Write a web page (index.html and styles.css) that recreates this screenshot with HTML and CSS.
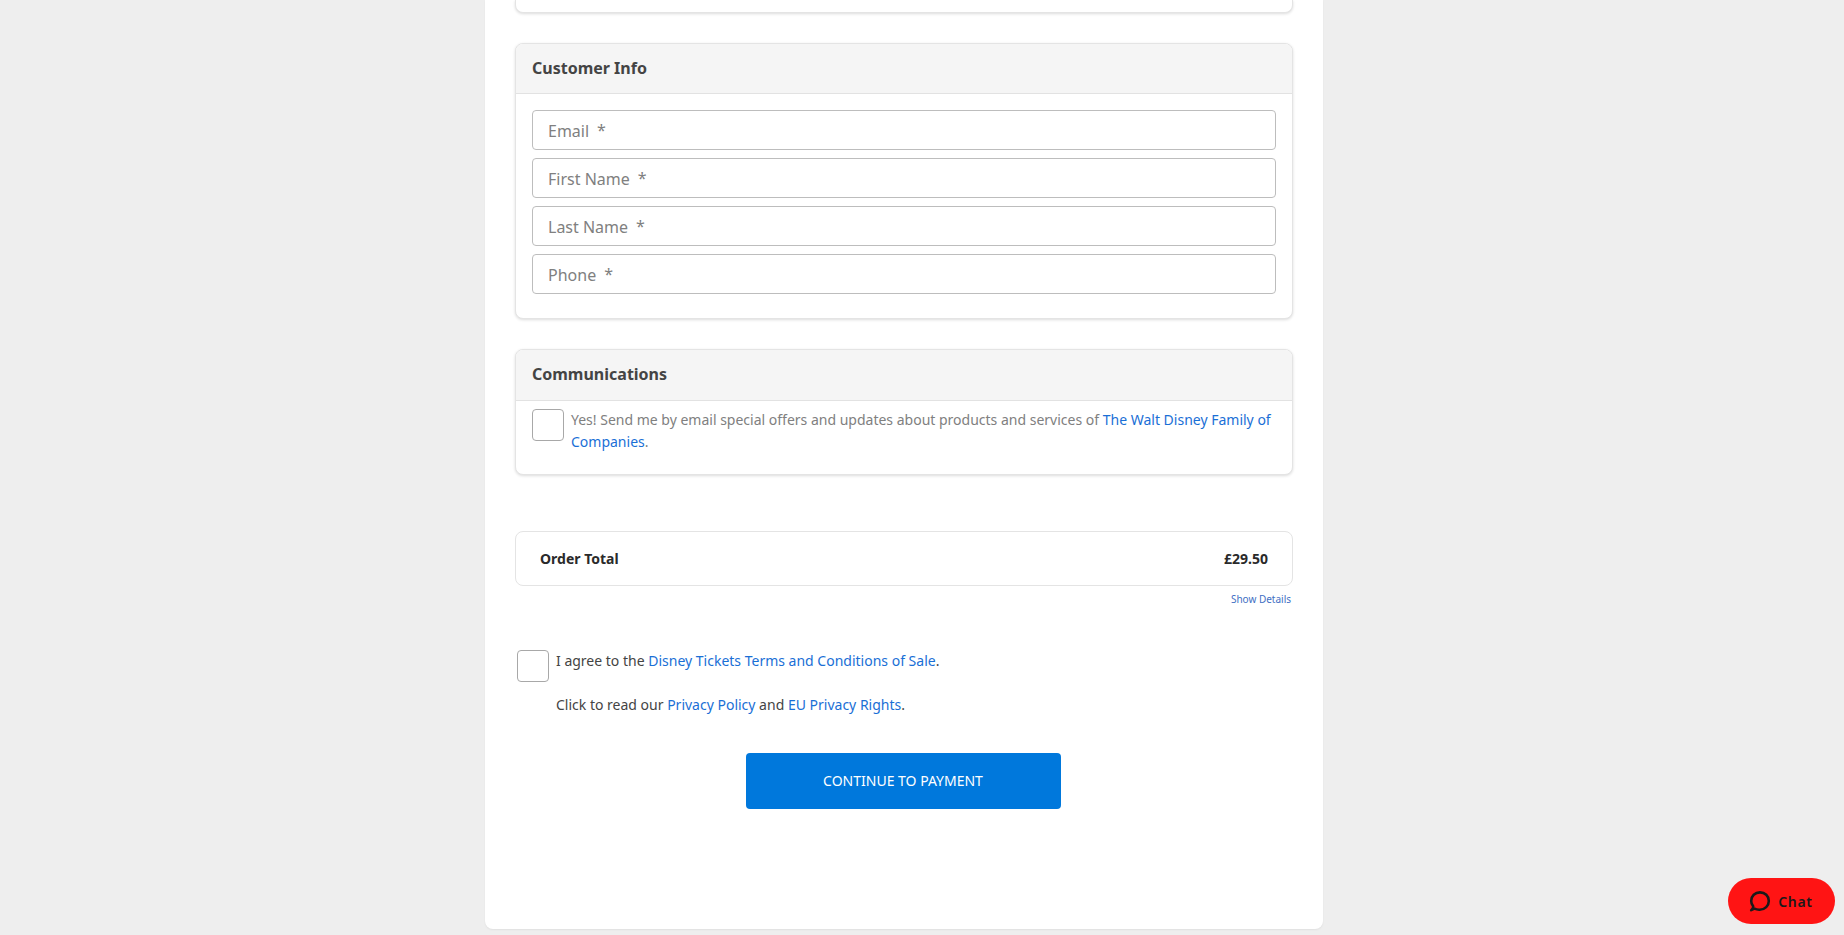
FILE: index.html
```html
<!DOCTYPE html>
<html lang="en">
<head>
<meta charset="utf-8">
<title>Checkout</title>
<link rel="stylesheet" href="styles.css">
</head>
<body>
<main class="panel">
  <section class="card card-top"></section>

  <section class="card card-info">
    <h2 class="card-head">Customer Info</h2>
    <div class="card-body fields">
      <div class="field"><span>Email</span><span class="star">*</span></div>
      <div class="field"><span>First Name</span><span class="star">*</span></div>
      <div class="field"><span>Last Name</span><span class="star">*</span></div>
      <div class="field"><span>Phone</span><span class="star">*</span></div>
    </div>
  </section>

  <section class="card card-comms">
    <h2 class="card-head">Communications</h2>
    <div class="card-body comms">
      <span class="box"></span>
      <p class="comms-text">Yes! Send me by email special offers and updates about products and services of <a href="#">The Walt Disney Family of Companies</a>.</p>
    </div>
  </section>

  <section class="total">
    <strong>Order Total</strong>
    <strong>£29.50</strong>
  </section>
  <div class="details"><a href="#">Show Details</a></div>

  <section class="agree">
    <span class="box"></span>
    <div class="agree-text">
      <p>I agree to the <a href="#">Disney Tickets Terms and Conditions of Sale</a>.</p>
      <p>Click to read our <a href="#">Privacy Policy</a> and <a href="#">EU Privacy Rights</a>.</p>
    </div>
  </section>

  <div class="actions"><button class="continue" type="button">CONTINUE TO PAYMENT</button></div>
</main>

<button class="chat" type="button">
  <svg class="chat-icon" viewBox="0 0 24 24" width="22" height="22" aria-hidden="true">
    <path d="M2.4 22 L6 20.4 C7.6 21.2 9.4 21.6 11.6 21.5 C17.4 21.3 21.6 17.2 21.6 11.9 C21.6 6.5 17.4 2.6 12 2.6 C6.6 2.6 2.4 6.5 2.4 11.9 C2.4 14.4 3.2 16.2 4.6 17.8 C4.8 19.2 4 20.8 2.4 22 Z" fill="none" stroke="currentColor" stroke-width="2.8" stroke-linejoin="round"/>
  </svg>
  <span>Chat</span>
</button>
</body>
</html>
```

FILE: styles.css
```css
* { box-sizing: border-box; }

html, body { height: 100%; }

body {
  margin: 0;
  height: 935px;
  overflow: hidden;
  padding-left: 485px;
  background: #eeeeee;
  font-family: "Noto Sans", sans-serif;
  color: #333333;
}

a { color: #1a6fd6; text-decoration: none; }
p { margin: 0; }

.panel {
  width: 838px;
  height: 929px;
  padding: 0 30px;
  background: #ffffff;
  border-radius: 0 0 8px 8px;
  box-shadow: 0 1px 2px rgba(0, 0, 0, 0.06);
}

.card {
  background: #ffffff;
  border: 1px solid #e4e4e4;
  border-radius: 8px;
  box-shadow: 0 1px 3px rgba(0, 0, 0, 0.14);
  overflow: hidden;
}

.card-top {
  height: 13px;
  border-top: 0;
  border-radius: 0 0 8px 8px;
  margin-bottom: 30px;
}

.card-info { height: 276px; margin-bottom: 30px; }
.card-comms { height: 126px; margin-bottom: 56px; }

.card-head {
  margin: 0;
  height: 50px;
  padding: 0 16px 2px;
  display: flex;
  align-items: center;
  background: #f5f5f5;
  border-bottom: 1px solid #e2e2e2;
  font-size: 16px;
  font-weight: 700;
  color: #444444;
}

.card-comms .card-head { height: 51px; }

.fields {
  display: flex;
  flex-direction: column;
  gap: 8px;
  padding: 16px 16px 0;
}

.field {
  height: 40px;
  padding: 2px 15px 0;
  display: flex;
  align-items: center;
  gap: 8px;
  border: 1px solid #bdbdbd;
  border-radius: 4px;
  font-size: 16px;
  color: #808080;
}

.star { position: relative; top: -1px; }

.comms {
  display: flex;
  gap: 7px;
  padding: 8px 16px 0;
}

.box {
  flex: none;
  width: 32px;
  height: 32px;
  background: #ffffff;
  border: 1px solid #a8a8a8;
  border-radius: 4px;
}

.comms-text {
  font-size: 14px;
  line-height: 22px;
  color: #808080;
}

.total {
  height: 55px;
  padding: 0 24px;
  display: flex;
  align-items: center;
  justify-content: space-between;
  border: 1px solid #e4e4e4;
  border-radius: 8px;
  font-size: 14px;
  color: #2a2a2a;
}

.details {
  margin-top: 6px;
  padding-right: 2px;
  text-align: right;
  font-size: 10px;
  line-height: 14px;
}

.details a { color: #3f6fc4; }

.agree {
  display: flex;
  gap: 7px;
  margin: 44px 0 0 2px;
  font-size: 14px;
  color: #444444;
}

.agree-text {
  display: flex;
  flex-direction: column;
  gap: 22px;
  line-height: 22px;
}

.actions {
  display: flex;
  justify-content: center;
  margin-top: 37px;
  padding-right: 2px;
}

.continue {
  width: 315px;
  height: 56px;
  padding: 0 0 2px;
  border: 0;
  border-radius: 4px;
  background: #0078dc;
  color: #ffffff;
  font: 400 14px "Noto Sans", sans-serif;
}

.chat {
  position: fixed;
  left: 1728px;
  top: 878px;
  width: 107px;
  height: 46px;
  padding: 0 1px 0 0;
  display: flex;
  align-items: center;
  justify-content: center;
  gap: 7px;
  border: 0;
  border-radius: 23px;
  background: #ff1414;
  color: #1a1a1a;
  font: 600 14px "Noto Sans", sans-serif;
  letter-spacing: 0.7px;
}

.chat-icon { flex: none; }
```
